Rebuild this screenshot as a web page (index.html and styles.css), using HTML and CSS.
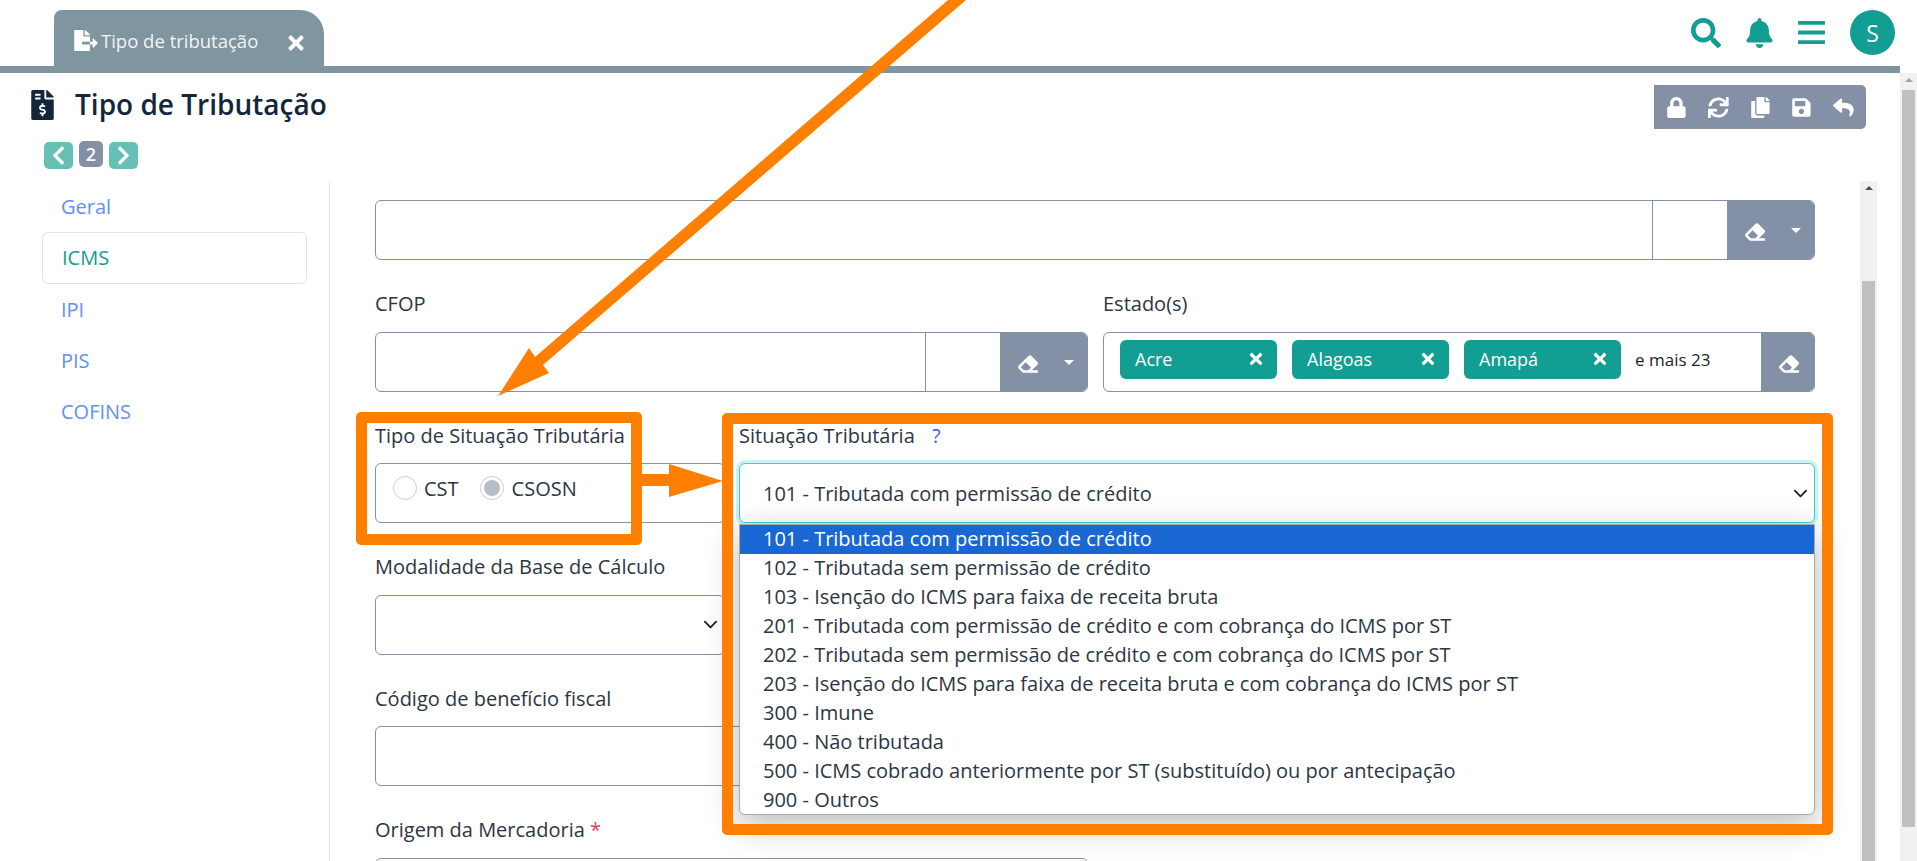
FILE: index.html
```html
<!DOCTYPE html>
<html lang="pt-BR">
<head>
    <meta charset="UTF-8">
    <meta name="viewport" content="width=device-width, initial-scale=1.0">
    <title>Tipo de Tributação</title>
    <link rel="stylesheet" href="styles.css">
</head>
<body>
    <!-- Icon set -->
    <svg class="icon-defs" xmlns="http://www.w3.org/2000/svg">
        <symbol id="i-search" viewBox="0 0 512 512"><path d="M505 442.7L405.3 343c-4.5-4.5-10.6-7-17-7H372c27.6-35.3 44-79.7 44-128C416 93.1 322.9 0 208 0S0 93.1 0 208s93.1 208 208 208c48.3 0 92.7-16.4 128-44v16.3c0 6.4 2.5 12.5 7 17l99.7 99.7c9.4 9.4 24.6 9.4 33.9 0l28.3-28.3c9.4-9.4 9.4-24.6.1-34zM208 336c-70.7 0-128-57.2-128-128 0-70.7 57.2-128 128-128 70.7 0 128 57.2 128 128 0 70.7-57.2 128-128 128z"/></symbol>
        <symbol id="i-bell" viewBox="0 0 448 512"><path d="M224 512c35.32 0 63.97-28.65 63.97-64H160.03c0 35.35 28.65 64 63.97 64zm215.39-149.71c-19.32-20.76-55.47-51.99-55.47-154.29 0-77.7-54.48-139.9-127.94-155.16V32c0-17.67-14.32-32-31.98-32s-31.98 14.33-31.98 32v20.84C118.56 68.1 64.08 130.3 64.08 208c0 102.3-36.15 133.53-55.47 154.29-6 6.45-8.66 14.16-8.61 21.71.11 16.4 12.98 32 32.1 32h383.8c19.12 0 32-15.6 32.1-32 .05-7.55-2.61-15.27-8.61-21.71z"/></symbol>
        <symbol id="i-bars" viewBox="0 0 28 24"><path d="M0 0h28v4H0zM0 10h28v4H0zM0 20h28v4H0z"/></symbol>
        <symbol id="i-times" viewBox="0 0 352 512"><path d="M242.72 256l100.07-100.07c12.28-12.28 12.28-32.19 0-44.48l-22.24-22.24c-12.28-12.28-32.19-12.28-44.48 0L176 189.28 75.93 89.21c-12.28-12.28-32.19-12.28-44.48 0L9.21 111.45c-12.28 12.28-12.28 32.19 0 44.48L109.28 256 9.21 356.07c-12.28 12.28-12.28 32.19 0 44.48l22.24 22.24c12.28 12.28 32.2 12.28 44.48 0L176 322.72l100.07 100.07c12.28 12.28 32.2 12.28 44.48 0l22.24-22.24c12.28-12.28 12.28-32.19 0-44.48L242.72 256z"/></symbol>
        <symbol id="i-lock" viewBox="0 0 448 512"><path d="M400 224h-24v-72C376 68.2 307.8 0 224 0S72 68.2 72 152v72H48c-26.5 0-48 21.5-48 48v192c0 26.5 21.5 48 48 48h352c26.5 0 48-21.5 48-48V272c0-26.5-21.5-48-48-48zm-104 0H152v-72c0-39.7 32.3-72 72-72s72 32.3 72 72v72z"/></symbol>
        <symbol id="i-sync" viewBox="0 0 512 512"><path d="M440.65 12.57l4 82.77A247.16 247.16 0 0 0 255.83 8C134.73 8 33.91 94.92 12.29 209.82A12 12 0 0 0 24.09 224h49.05a12 12 0 0 0 11.67-9.26 175.91 175.91 0 0 1 317-56.94l-101.46-4.86a12 12 0 0 0-12.57 12v47.41a12 12 0 0 0 12 12H500a12 12 0 0 0 12-12V12a12 12 0 0 0-12-12h-47.37a12 12 0 0 0-11.98 12.57zM255.83 432a175.61 175.61 0 0 1-146-77.8l101.8 4.87a12 12 0 0 0 12.57-12v-47.4a12 12 0 0 0-12-12H12a12 12 0 0 0-12 12V500a12 12 0 0 0 12 12h47.35a12 12 0 0 0 12-12.6l-4.15-82.57A247.17 247.17 0 0 0 255.83 504c121.11 0 221.93-86.92 243.55-201.82a12 12 0 0 0-11.8-14.18h-49.05a12 12 0 0 0-11.67 9.26A175.86 175.86 0 0 1 255.83 432z"/></symbol>
        <symbol id="i-copy" viewBox="0 0 448 512"><path d="M320 448v40c0 13.255-10.745 24-24 24H24c-13.255 0-24-10.745-24-24V120c0-13.255 10.745-24 24-24h72v296c0 30.879 25.121 56 56 56h168zm0-344V0H152c-13.255 0-24 10.745-24 24v368c0 13.255 10.745 24 24 24h272c13.255 0 24-10.745 24-24V128H344c-13.2 0-24-10.8-24-24zm120.971-31.029L375.029 7.029A24 24 0 0 0 358.059 0H352v96h96v-6.059a24 24 0 0 0-7.029-16.97z"/></symbol>
        <symbol id="i-save" viewBox="0 0 448 512"><path d="M433.941 129.941l-83.882-83.882A48 48 0 0 0 316.118 32H48C21.49 32 0 53.49 0 80v352c0 26.51 21.49 48 48 48h352c26.51 0 48-21.49 48-48V163.882a48 48 0 0 0-14.059-33.941zM224 416c-35.346 0-64-28.654-64-64 0-35.346 28.654-64 64-64s64 28.654 64 64c0 35.346-28.654 64-64 64zm96-304.52V212c0 6.627-5.373 12-12 12H76c-6.627 0-12-5.373-12-12V108c0-6.627 5.373-12 12-12h228.52c3.183 0 6.235 1.264 8.485 3.515l3.48 3.48A11.996 11.996 0 0 1 320 111.48z"/></symbol>
        <symbol id="i-reply" viewBox="0 0 512 512"><path d="M8.309 189.836L184.313 37.851C199.719 24.546 224 35.347 224 56.015v80.053c160.629 1.839 288 34.032 288 186.258 0 61.441-39.581 122.309-83.333 154.132-13.653 9.931-33.111-2.533-28.077-18.631 45.344-145.012-21.507-183.51-176.59-185.742V360c0 20.7-24.3 31.453-39.687 18.164l-176.004-152c-11.071-9.562-11.086-26.753 0-36.328z"/></symbol>
        <symbol id="i-eraser" viewBox="0 0 512 512"><path d="M497.941 273.941c18.745-18.745 18.745-49.137 0-67.882l-160-160c-18.745-18.745-49.137-18.745-67.882 0l-256 256c-18.745 18.745-18.745 49.137 0 67.882l96 96A48.004 48.004 0 0 0 144 480h356c6.627 0 12-5.373 12-12v-40c0-6.627-5.373-12-12-12H355.883l142.058-142.059zm-302.627-62.627l137.373 137.373L265.373 416H150.628l-80-80 124.686-124.686z"/></symbol>
        <symbol id="i-left" viewBox="0 0 320 512"><path d="M34.52 239.03L228.87 44.69c9.37-9.37 24.57-9.37 33.94 0l22.67 22.67c9.36 9.36 9.37 24.52.04 33.9L131.49 256l154.02 154.75c9.34 9.38 9.32 24.54-.04 33.9l-22.67 22.67c-9.37 9.37-24.57 9.37-33.94 0L34.52 272.97c-9.37-9.37-9.37-24.57 0-33.94z"/></symbol>
        <symbol id="i-right" viewBox="0 0 320 512"><path d="M285.476 272.971L91.132 467.314c-9.373 9.373-24.569 9.373-33.941 0l-22.667-22.667c-9.357-9.357-9.375-24.522-.04-33.901L188.505 256 34.484 101.255c-9.335-9.379-9.317-24.544.04-33.901l22.667-22.667c9.373-9.373 24.569-9.373 33.941 0L285.475 239.03c9.373 9.372 9.373 24.568.001 33.941z"/></symbol>
        <symbol id="i-invoice" viewBox="0 0 384 512"><path d="M377 105L279.1 7c-4.5-4.5-10.6-7-17-7H256v128h128v-6.1c0-6.3-2.5-12.4-7-16.9zm-153 31V0H24C10.7 0 0 10.7 0 24v464c0 13.3 10.7 24 24 24h336c13.3 0 24-10.7 24-24V160H248c-13.2 0-24-10.8-24-24zM64 72c0-4.42 3.58-8 8-8h80c4.42 0 8 3.58 8 8v16c0 4.42-3.58 8-8 8H72c-4.42 0-8-3.58-8-8V72zm0 80v-16c0-4.42 3.58-8 8-8h80c4.42 0 8 3.58 8 8v16c0 4.42-3.58 8-8 8H72c-4.42 0-8-3.58-8-8zm144 263.88V440c0 4.42-3.58 8-8 8h-16c-4.42 0-8-3.58-8-8v-24.29c-11.29-.58-22.27-4.52-31.37-11.35-3.9-2.93-4.1-8.77-.57-12.14l11.75-11.21c2.77-2.64 6.89-2.76 10.13-.73 3.87 2.42 8.26 3.72 12.82 3.72h28.11c6.5 0 11.8-5.92 11.8-13.19 0-5.95-3.61-11.19-8.77-12.73l-45-13.5c-18.59-5.58-31.58-23.42-31.58-43.39 0-24.52 19.05-44.44 42.67-45.07V232c0-4.42 3.58-8 8-8h16c4.42 0 8 3.58 8 8v24.29c11.29.58 22.27 4.51 31.37 11.35 3.9 2.93 4.1 8.77.57 12.14l-11.75 11.21c-2.77 2.64-6.89 2.76-10.13.73-3.87-2.43-8.26-3.72-12.82-3.72h-28.11c-6.5 0-11.8 5.92-11.8 13.19 0 5.95 3.61 11.19 8.77 12.73l45 13.5c18.59 5.58 31.58 23.42 31.58 43.39 0 24.53-19.05 44.44-42.67 45.07z"/></symbol>
        <symbol id="i-export" viewBox="0 0 576 512"><path d="M384 121.9c0-6.3-2.5-12.4-7-16.9L279.1 7c-4.5-4.5-10.6-7-17-7H256v128h128zM571 308l-95.7-96.4c-10.1-10.1-27.4-3-27.4 11.3V288h-64v64h64v65.2c0 14.3 17.3 21.4 27.4 11.3L571 332c6.6-6.6 6.6-17.4 0-24zm-379 28v-32c0-8.8 7.2-16 16-16h176V160H248c-13.2 0-24-10.8-24-24V0H24C10.7 0 0 10.7 0 24v464c0 13.3 10.7 24 24 24h336c13.3 0 24-10.7 24-24V352H208c-8.8 0-16-7.2-16-16z"/></symbol>
        <symbol id="i-chevron" viewBox="0 0 16 16"><path fill="none" stroke="currentColor" stroke-width="2" stroke-linecap="round" stroke-linejoin="round" d="M2 5l6 6 6-6"/></symbol>
    </svg>

    <div class="app">
        <div class="page">
            <!-- Top bar -->
            <header class="topbar">
                <div class="tab">
                    <svg class="tab-icon"><use href="#i-export"/></svg>
                    <span class="tab-text">Tipo de tributação</span>
                    <svg class="tab-close"><use href="#i-times"/></svg>
                </div>
                <div class="top-actions">
                    <svg class="top-icon"><use href="#i-search"/></svg>
                    <svg class="top-icon bell"><use href="#i-bell"/></svg>
                    <svg class="top-icon bars"><use href="#i-bars"/></svg>
                    <div class="avatar">S</div>
                </div>
            </header>

            <!-- Title and toolbar -->
            <div class="title-row">
                <div class="title">
                    <svg class="title-icon"><use href="#i-invoice"/></svg>
                    <h1>Tipo de Tributação</h1>
                </div>
                <div class="toolbar">
                    <svg><use href="#i-lock"/></svg>
                    <svg><use href="#i-sync"/></svg>
                    <svg><use href="#i-copy"/></svg>
                    <svg><use href="#i-save"/></svg>
                    <svg><use href="#i-reply"/></svg>
                </div>
            </div>

            <div class="pager">
                <span class="pager-btn"><svg><use href="#i-left"/></svg></span>
                <span class="pager-num">2</span>
                <span class="pager-btn"><svg><use href="#i-right"/></svg></span>
            </div>

            <div class="content">
                <nav class="sidebar">
                    <a href="#">Geral</a>
                    <a href="#" class="active">ICMS</a>
                    <a href="#">IPI</a>
                    <a href="#">PIS</a>
                    <a href="#">COFINS</a>
                </nav>

                <main class="form-area">
                    <div class="form">
                        <div class="input-group first-row">
                            <div class="field grow"></div>
                            <div class="field small"></div>
                            <div class="addon"><svg class="eraser"><use href="#i-eraser"/></svg><span class="caret"></span></div>
                        </div>

                        <div class="row half">
                            <div>
                                <label>CFOP</label>
                                <div class="input-group">
                                    <div class="field grow"></div>
                                    <div class="field small"></div>
                                    <div class="addon"><svg class="eraser"><use href="#i-eraser"/></svg><span class="caret"></span></div>
                                </div>
                            </div>
                            <div>
                                <label>Estado(s)</label>
                                <div class="input-group">
                                    <div class="field grow chips">
                                        <span class="chip">Acre<svg><use href="#i-times"/></svg></span>
                                        <span class="chip">Alagoas<svg><use href="#i-times"/></svg></span>
                                        <span class="chip">Amapá<svg><use href="#i-times"/></svg></span>
                                        <span class="more">e mais 23</span>
                                    </div>
                                    <div class="addon single"><svg class="eraser"><use href="#i-eraser"/></svg></div>
                                </div>
                            </div>
                        </div>

                        <div class="row split">
                            <div>
                                <label>Tipo de Situação Tributária</label>
                                <div class="radio-box">
                                    <span class="radio"></span><span class="radio-text">CST</span>
                                    <span class="radio checked"></span><span class="radio-text">CSOSN</span>
                                </div>
                            </div>
                            <div>
                                <label>Situação Tributária <span class="help">?</span></label>
                                <div class="select focused">
                                    <span>101 - Tributada com permissão de crédito</span>
                                    <svg class="chevron"><use href="#i-chevron"/></svg>
                                    <ul class="dropdown">
                                        <li class="selected">101 - Tributada com permissão de crédito</li>
                                        <li>102 - Tributada sem permissão de crédito</li>
                                        <li>103 - Isenção do ICMS para faixa de receita bruta</li>
                                        <li>201 - Tributada com permissão de crédito e com cobrança do ICMS por ST</li>
                                        <li>202 - Tributada sem permissão de crédito e com cobrança do ICMS por ST</li>
                                        <li>203 - Isenção do ICMS para faixa de receita bruta e com cobrança do ICMS por ST</li>
                                        <li>300 - Imune</li>
                                        <li>400 - Não tributada</li>
                                        <li>500 - ICMS cobrado anteriormente por ST (substituído) ou por antecipação</li>
                                        <li>900 - Outros</li>
                                    </ul>
                                </div>
                            </div>
                        </div>

                        <div class="row split">
                            <div>
                                <label>Modalidade da Base de Cálculo</label>
                                <div class="select"><span></span><svg class="chevron"><use href="#i-chevron"/></svg></div>
                            </div>
                            <div></div>
                        </div>

                        <div class="row half">
                            <div>
                                <label>Código de benefício fiscal</label>
                                <div class="input-group"><div class="field grow"></div></div>
                            </div>
                        </div>

                        <div class="row half">
                            <div>
                                <label>Origem da Mercadoria <span class="required">*</span></label>
                                <div class="input-group"><div class="field grow"></div></div>
                            </div>
                        </div>
                    </div>

                    <div class="scrollbar inner"><span class="arrow"></span><span class="thumb"></span></div>
                </main>
            </div>
        </div>

        <div class="scrollbar outer"><span class="arrow"></span><span class="thumb"></span></div>
    </div>

    <!-- Annotations drawn over the screenshot -->
    <div class="mark mark-type"></div>
    <div class="mark mark-status"></div>
    <svg class="arrows" viewBox="0 0 1917 861">
        <polygon points="948,0 966,0 543,365 549,373 498,396 529,348 535,357"/>
        <polygon points="642,474 669,474 669,464 723,481 669,497 669,486 642,486"/>
    </svg>
</body>
</html>
```

FILE: styles.css
```css
/* General */
* {
    box-sizing: border-box;
}

html, body {
    height: 861px;
    overflow: hidden;
}

body {
    margin: 0;
    position: relative;
    font-family: "Open Sans", "Noto Sans", sans-serif;
    font-size: 20px;
    color: #2b3644;
    background: #fff;
}

.icon-defs {
    display: none;
}

svg {
    fill: currentColor;
}

.app {
    display: flex;
    height: 861px;
    overflow: hidden;
}

.page {
    flex: 1;
    min-width: 0;
}

/* Top bar */
.topbar {
    display: flex;
    justify-content: space-between;
    height: 73px;
    padding: 10px 5px 0 54px;
    border-bottom: 7px solid #7f959f;
}

.tab {
    display: flex;
    align-items: center;
    width: 270px;
    height: 56px;
    padding: 0 20px;
    background: #7f959f;
    color: #fff;
    border-radius: 8px 24px 0 0;
}

.tab-icon {
    flex: none;
    width: 24px;
    height: 21px;
    margin-top: 4px;
}

.tab-text {
    margin: 4px 0 0 3px;
    font-size: 18.5px;
    white-space: nowrap;
    opacity: 0.9;
}

.tab-close {
    flex: none;
    width: 16px;
    height: 22px;
    margin: 9px 0 0 auto;
}

.top-actions {
    display: flex;
    align-items: flex-start;
    color: #129e92;
}

.top-icon {
    width: 30px;
    height: 30px;
    margin: 8px 25px 0 0;
}

.top-icon.bell {
    width: 27px;
}

.top-icon.bars {
    width: 27px;
    height: 23px;
    margin-top: 11px;
}

.avatar {
    display: flex;
    align-items: center;
    justify-content: center;
    width: 45px;
    height: 45px;
    border-radius: 50%;
    background: #129e92;
    color: #fff;
    font-size: 23px;
}

/* Title */
.title-row {
    display: flex;
    justify-content: space-between;
    padding: 12px 34px 0 31px;
}

.title {
    display: flex;
    align-items: center;
    height: 40px;
}

.title-icon {
    width: 23px;
    height: 30px;
    color: #14263c;
}

h1 {
    margin: -2px 0 0 21px;
    font-size: 28px;
    font-weight: 600;
    color: #14263c;
}

.toolbar {
    display: flex;
    align-items: center;
    gap: 21px;
    width: 212px;
    height: 44px;
    padding: 0 12px;
    background: #8490a6;
    color: #fff;
    border-radius: 0 5px 5px 0;
}

.toolbar svg {
    width: 21px;
    height: 21px;
}

.pager {
    display: flex;
    gap: 6px;
    height: 28px;
    margin: 12px 0 12px 44px;
}

.pager-btn {
    display: flex;
    align-items: center;
    justify-content: center;
    width: 29px;
    height: 27px;
    margin-top: 1px;
    background: #66c0b6;
    color: #fff;
    border-radius: 5px;
}

.pager-btn svg {
    width: 15px;
    height: 21px;
}

.pager-num {
    width: 24px;
    height: 26px;
    background: #8490a6;
    color: #fff;
    border-radius: 5px;
    font-size: 18px;
    font-weight: 600;
    line-height: 26px;
    text-align: center;
}

/* Sidebar */
.content {
    display: flex;
    height: 680px;
}

.sidebar {
    width: 330px;
    flex: none;
    padding: 0 22px 0 42px;
    border-right: 1px solid #e3e3e3;
}

.sidebar a {
    display: flex;
    align-items: center;
    height: 51.3px;
    padding-left: 19px;
    color: #5f92f2;
    text-decoration: none;
}

.sidebar a.active {
    border: 1px solid #e3e3e3;
    border-radius: 6px;
    color: #129e92;
}

/* Form */
.form-area {
    display: flex;
    flex: 1;
    min-width: 0;
    height: 680px;
    padding-left: 45px;
    overflow: hidden;
}

.form {
    flex: none;
    width: 1440px;
    padding-top: 19px;
}

.row {
    display: grid;
    margin-top: 32px;
}

.row.half {
    grid-template-columns: 713px 712px;
    column-gap: 15px;
}

.row.split {
    grid-template-columns: 350px 1076px;
    column-gap: 14px;
}

label {
    display: block;
    height: 39.5px;
    line-height: 24px;
}

.help {
    margin-left: 12px;
    color: #3f5fc4;
}

.required {
    color: #d9435f;
}

.input-group {
    display: flex;
    height: 60px;
    border: 1px solid #8490a6;
    border-radius: 6px;
    overflow: hidden;
}

.field.grow {
    flex: 1;
    min-width: 0;
}

.field.small {
    width: 75px;
    border-left: 1px solid #8490a6;
}

.addon {
    display: flex;
    align-items: center;
    gap: 26px;
    width: 87px;
    padding-left: 18px;
    background: #8490a6;
    color: #fff;
}

.addon.single {
    width: 53px;
    gap: 0;
}

.eraser {
    width: 20px;
    height: 20px;
    margin-top: 4px;
}

.caret {
    width: 0;
    height: 0;
    margin-top: 1px;
    border: 5px solid transparent;
    border-top-color: #fff;
    border-bottom: 0;
}

/* Chips */
.chips {
    display: flex;
    align-items: center;
    gap: 15px;
    padding: 0 0 5px 16px;
}

.chip {
    display: flex;
    align-items: center;
    justify-content: space-between;
    flex: none;
    width: 157px;
    height: 39px;
    padding: 0 14px 0 15px;
    background: #129e92;
    color: #fff;
    font-size: 18px;
    border-radius: 6px;
}

.chip svg {
    width: 14px;
    height: 18px;
}

.more {
    margin-left: -1px;
    font-size: 17px;
    color: #1c2430;
    white-space: nowrap;
}

/* Radios */
.radio-box {
    display: flex;
    align-items: center;
    height: 60px;
    padding: 0 0 10px 17px;
    border: 1px solid #8490a6;
    border-radius: 6px;
}

.radio {
    width: 24px;
    height: 24px;
    border: 1px solid #c9ced4;
    border-radius: 50%;
}

.radio.checked::after {
    content: "";
    display: block;
    width: 16px;
    height: 16px;
    margin: 3px;
    border-radius: 50%;
    background: #b6bdc5;
}

.radio-text {
    margin: 0 21px 0 7px;
}

.radio.checked + .radio-text {
    margin-left: 8px;
}

/* Selects */
.select {
    position: relative;
    display: flex;
    align-items: center;
    justify-content: space-between;
    height: 60px;
    padding: 0 6px 0 23px;
    border: 1px solid #8490a6;
    border-radius: 6px;
    background: #fff;
}

.select.focused {
    border-color: #3fd0c6;
    box-shadow: 0 0 0 3px #c8f3f0;
}

.select.focused > span {
    margin-top: 1px;
}

.chevron {
    width: 15px;
    height: 15px;
    color: #1c2430;
}

.dropdown {
    position: absolute;
    top: 60px;
    left: -1px;
    right: -1px;
    z-index: 2;
    height: 291px;
    margin: 0;
    padding: 0;
    list-style: none;
    background: #fff;
    border: 1px solid #aaa;
    border-radius: 0 0 6px 6px;
    box-shadow: 0 10px 34px rgba(0, 0, 0, 0.28);
}

.dropdown li {
    height: 29px;
    padding-left: 23px;
    line-height: 28px;
    white-space: nowrap;
}

.dropdown li.selected {
    background: #1967d2;
    color: #fff;
}

/* Scrollbars */
.scrollbar {
    display: flex;
    flex-direction: column;
    align-items: center;
    flex: none;
    width: 17px;
    background: #f1f1f1;
}

.scrollbar.inner {
    margin-left: 45px;
}

.scrollbar.outer {
    margin-top: 73px;
}

.arrow {
    width: 0;
    height: 0;
    margin-top: 5px;
    border: 4px solid transparent;
    border-bottom-color: #505050;
    border-top: 0;
}

.scrollbar.outer .arrow {
    border-bottom-color: #a3a3a3;
}

.thumb {
    display: block;
    flex: 1;
    width: 13px;
    margin-top: 91px;
    background: #c0c0c0;
}

.scrollbar.outer .thumb {
    flex: none;
    height: 737px;
    margin-top: 8px;
}

/* Annotations */
.mark {
    position: absolute;
    z-index: 3;
    border: 11px solid #ff8000;
    border-radius: 5px;
}

.mark-type {
    left: 356px;
    top: 412px;
    width: 286px;
    height: 133px;
}

.mark-status {
    left: 722px;
    top: 413px;
    width: 1111px;
    height: 422px;
}

.arrows {
    position: absolute;
    left: 0;
    top: 0;
    z-index: 3;
    width: 1917px;
    height: 861px;
    fill: #ff8000;
}
```
